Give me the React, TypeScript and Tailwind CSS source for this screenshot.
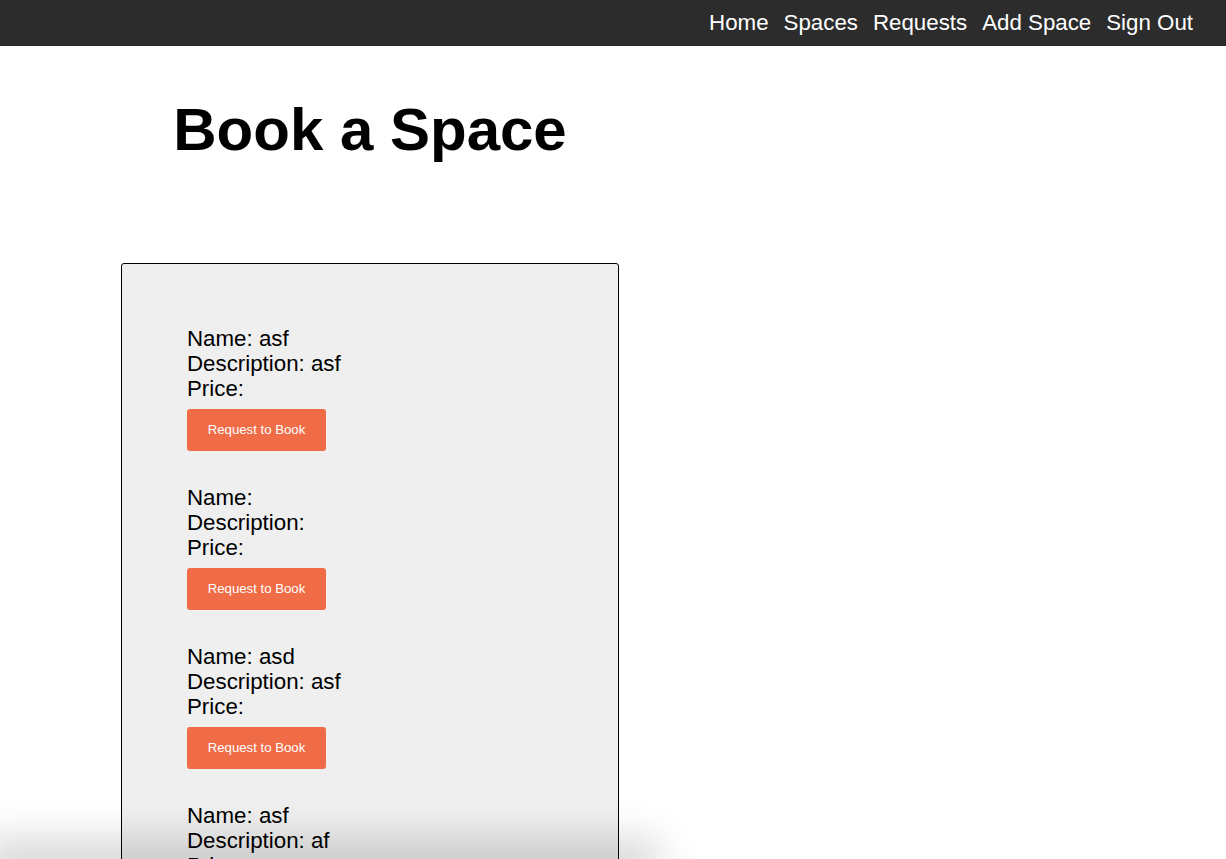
import React from "react";

const spaces = [
  { name: "asf", description: "asf", price: "" },
  { name: "", description: "", price: "" },
  { name: "asd", description: "asf", price: "" },
  { name: "asf", description: "af", price: "" },
  { name: "asd", description: "asd", price: "" },
];

export default function App() {
  return (
    <div className="min-h-screen bg-white text-black" style={{ fontFamily: '"Liberation Sans", Arial, Helvetica, sans-serif' }}>
      <nav className="h-[46px] bg-[#2c2c2c] flex items-center justify-end pr-[33px] gap-[15px] text-[22.3px] text-white">
        <a>Home</a>
        <a>Spaces</a>
        <a>Requests</a>
        <a>Add Space</a>
        <a>Sign Out</a>
      </nav>
      <div className="w-[498px] ml-[121px]">
        <h1 className="text-center font-bold text-[60px] leading-none mt-[54px]">Book a Space</h1>
        <div className="mt-[103px] border border-black rounded-[3px] bg-[#efefef] pt-[62px] pl-[65px] pb-[40px] flex flex-col gap-[34px]">
          {spaces.map((s, i) => (
            <div key={i} className="flex flex-col items-start">
              <div className="text-[22.3px] leading-[25px]">Name: {s.name}</div>
              <div className="text-[22.3px] leading-[25px]">Description: {s.description}</div>
              <div className="text-[22.3px] leading-[25px]">Price: {s.price}</div>
              <button className="mt-[8px] w-[139px] h-[42px] rounded-[3px] bg-[#ef6c47] text-white text-[13.2px]">Request to Book</button>
            </div>
          ))}
        </div>
      </div>
      <div className="fixed bottom-[-4px] left-0 w-[640px] h-[4px] shadow-[0_0_40px_18px_rgba(0,0,0,0.18)] pointer-events-none" />
    </div>
  );
}
